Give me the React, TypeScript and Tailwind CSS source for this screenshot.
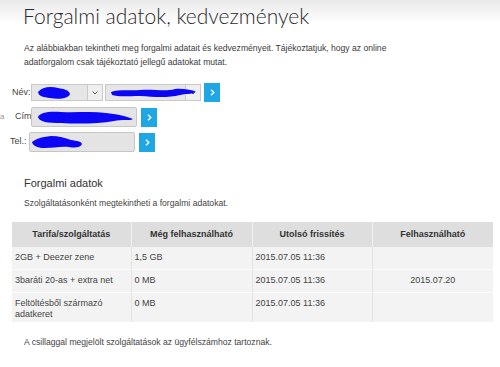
import React from "react";

type Row = { name: React.ReactNode; left: string; updated: string; until: string; h: string };

const rows: Row[] = [
  { name: "2GB + Deezer zene", left: "1,5 GB", updated: "2015.07.05 11:36", until: "", h: "h-[22px]" },
  { name: "3baráti 20-as + extra net", left: "0 MB", updated: "2015.07.05 11:36", until: "2015.07.20", h: "h-[23px]" },
  {
    name: (
      <>
        Feltöltésből származó
        <br />
        adatkeret
      </>
    ),
    left: "0 MB",
    updated: "2015.07.05 11:36",
    until: "",
    h: "h-[30px]",
  },
];

const Scribble = ({ d, w, h, className }: { d: string; w: number; h: number; className: string }) => (
  <svg width={w} height={h} viewBox={`0 0 ${w} ${h}`} className={`absolute ${className}`}>
    <path d={d} fill="#0b06f5" />
  </svg>
);

const GoButton = () => (
  <button className="w-[16px] h-[19px] bg-[#1fa6e4] flex items-center justify-center">
    <svg width="5" height="7" viewBox="0 0 5 7">
      <path d="M1 0.8 L3.8 3.5 L1 6.2" stroke="white" strokeWidth="1.4" fill="none" />
    </svg>
  </button>
);

const Chevron = () => (
  <div className="w-[15px] h-full border-l border-[#c9c9c9] bg-[#efefef] flex items-center justify-center">
    <svg width="6" height="4" viewBox="0 0 6 4">
      <path d="M0.6 0.6 L3 3 L5.4 0.6" stroke="#555" strokeWidth="1" fill="none" />
    </svg>
  </div>
);

const App = () => {
  return (
    <div className="w-[500px] h-[367px] overflow-hidden bg-[linear-gradient(to_bottom,#e9e9e9_0px,#ffffff_24px)] text-[#333] font-['Liberation_Sans',Arial,sans-serif]">
      <h1 className="pl-[23px] pt-[2px] h-[30px] text-[21px] leading-[28px] font-light font-['Lato',sans-serif] text-[#2b2b2b]">
        Forgalmi adatok, kedvezmények
      </h1>
      <p className="pl-[24px] mt-[11px] text-[8.6px] leading-[14px] text-[#3a3a3a] whitespace-nowrap">
        Az alábbiakban tekintheti meg forgalmi adatait és kedvezményeit. Tájékoztatjuk, hogy az online
        <br />
        adatforgalom csak tájékoztató jellegű adatokat mutat.
      </p>

      <div className="mt-[14px] flex flex-col text-[9px] text-[#444]">
        <div className="flex items-center h-[19px]">
          <span className="w-[31px] pl-[12px]">Név:</span>
          <div className="relative w-[72px] h-[17px] bg-[#e6e6e6] border border-[#c9c9c9] flex justify-end">
            <Scribble w={36} h={14} className="left-[4px] top-[1px]" d="M2 6 C6 1 14 0 22 2 C28 3 33 4 34 8 C33 12 24 14 14 12 C8 11 3 11 2 6 Z" />
            <Chevron />
          </div>
          <div className="relative w-[96px] h-[17px] ml-[2px] bg-[#e6e6e6] border border-[#c9c9c9] flex justify-end">
            <Scribble w={86} h={12} className="left-[4px] top-[2px]" d="M1 5 C10 2 20 4 30 3 C45 2 55 5 65 2 C72 1 80 3 85 4 C84 8 78 6 70 8 C58 11 45 10 30 9 C18 9 8 10 2 8 Z" />
            <Chevron />
          </div>
          <div className="ml-[3px]">
            <GoButton />
          </div>
        </div>

        <div className="flex items-center h-[20px] mt-[5px]">
          <span className="w-[15px] text-[#999] text-[8px]">a</span>
          <span className="w-[16px]">Cím:</span>
          <div className="relative w-[106px] h-[20px] bg-[#e4e4e4] border border-[#c6c6c6] rounded-[2px]">
            <Scribble w={99} h={16} className="left-[4px] top-[1px]" d="M2 8 C4 3 14 2 25 3 C40 4 55 2 70 4 C80 5 90 7 97 10 C95 12 85 10 78 12 C62 15 40 15 25 14 C12 14 3 13 2 8 Z" />
          </div>
          <div className="ml-[4px]">
            <GoButton />
          </div>
        </div>

        <div className="flex items-center h-[20px] mt-[5px]">
          <span className="w-[29px] pl-[10px]">Tel.:</span>
          <div className="relative w-[106px] h-[20px] bg-[#e4e4e4] border border-[#c6c6c6] rounded-[2px]">
            <Scribble w={52} h={15} className="left-[1px] top-[2px]" d="M1 7 C5 4 10 2 20 1 C28 1 34 3 40 5 C46 6 50 6 51 9 C49 13 44 13 38 12 C30 11 22 13 14 13 C7 13 2 11 1 7 Z" />
          </div>
          <div className="ml-[4px]">
            <GoButton />
          </div>
        </div>
      </div>

      <h2 className="pl-[24px] mt-[23px] text-[11px] leading-[16px] text-[#333]">Forgalmi adatok</h2>
      <p className="pl-[24px] mt-[6px] text-[8.6px] leading-[12px] text-[#444]">
        Szolgáltatásonként megtekintheti a forgalmi adatokat.
      </p>

      <table className="ml-[12px] mt-[13px] w-[481px] table-fixed border-collapse text-[9px] text-[#444]">
        <thead>
          <tr className="h-[25px] bg-[#dedede] text-[#333]">
            <th className="w-[119px] font-bold text-center border-r border-[#f2f2f2]">Tarifa/szolgáltatás</th>
            <th className="w-[121px] font-bold text-center border-r border-[#f2f2f2]">Még felhasználható</th>
            <th className="w-[120px] font-bold text-center border-r border-[#f2f2f2]">Utolsó frissítés</th>
            <th className="w-[121px] font-bold text-center">Felhasználható</th>
          </tr>
        </thead>
        <tbody className="bg-[#f3f3f3]">
          {rows.map((r, i) => (
            <tr key={i} className={`${r.h} ${i > 0 ? "border-t border-[#fbfbfb]" : ""}`}>
              <td className="align-top pt-[5px] px-[3px] leading-[11px] border-r border-[#e3e3e3]">{r.name}</td>
              <td className="align-top pt-[5px] px-[3px] leading-[11px] border-r border-[#e3e3e3]">{r.left}</td>
              <td className="align-top pt-[5px] px-[3px] leading-[11px] border-r border-[#e3e3e3]">{r.updated}</td>
              <td className="align-top pt-[5px] px-[3px] leading-[11px] text-center">{r.until}</td>
            </tr>
          ))}
        </tbody>
      </table>

      <p className="pl-[24px] mt-[14px] text-[8.6px] leading-[12px] text-[#444]">
        A csillaggal megjelölt szolgáltatások az ügyfélszámhoz tartoznak.
      </p>
    </div>
  );
};

export default App;
